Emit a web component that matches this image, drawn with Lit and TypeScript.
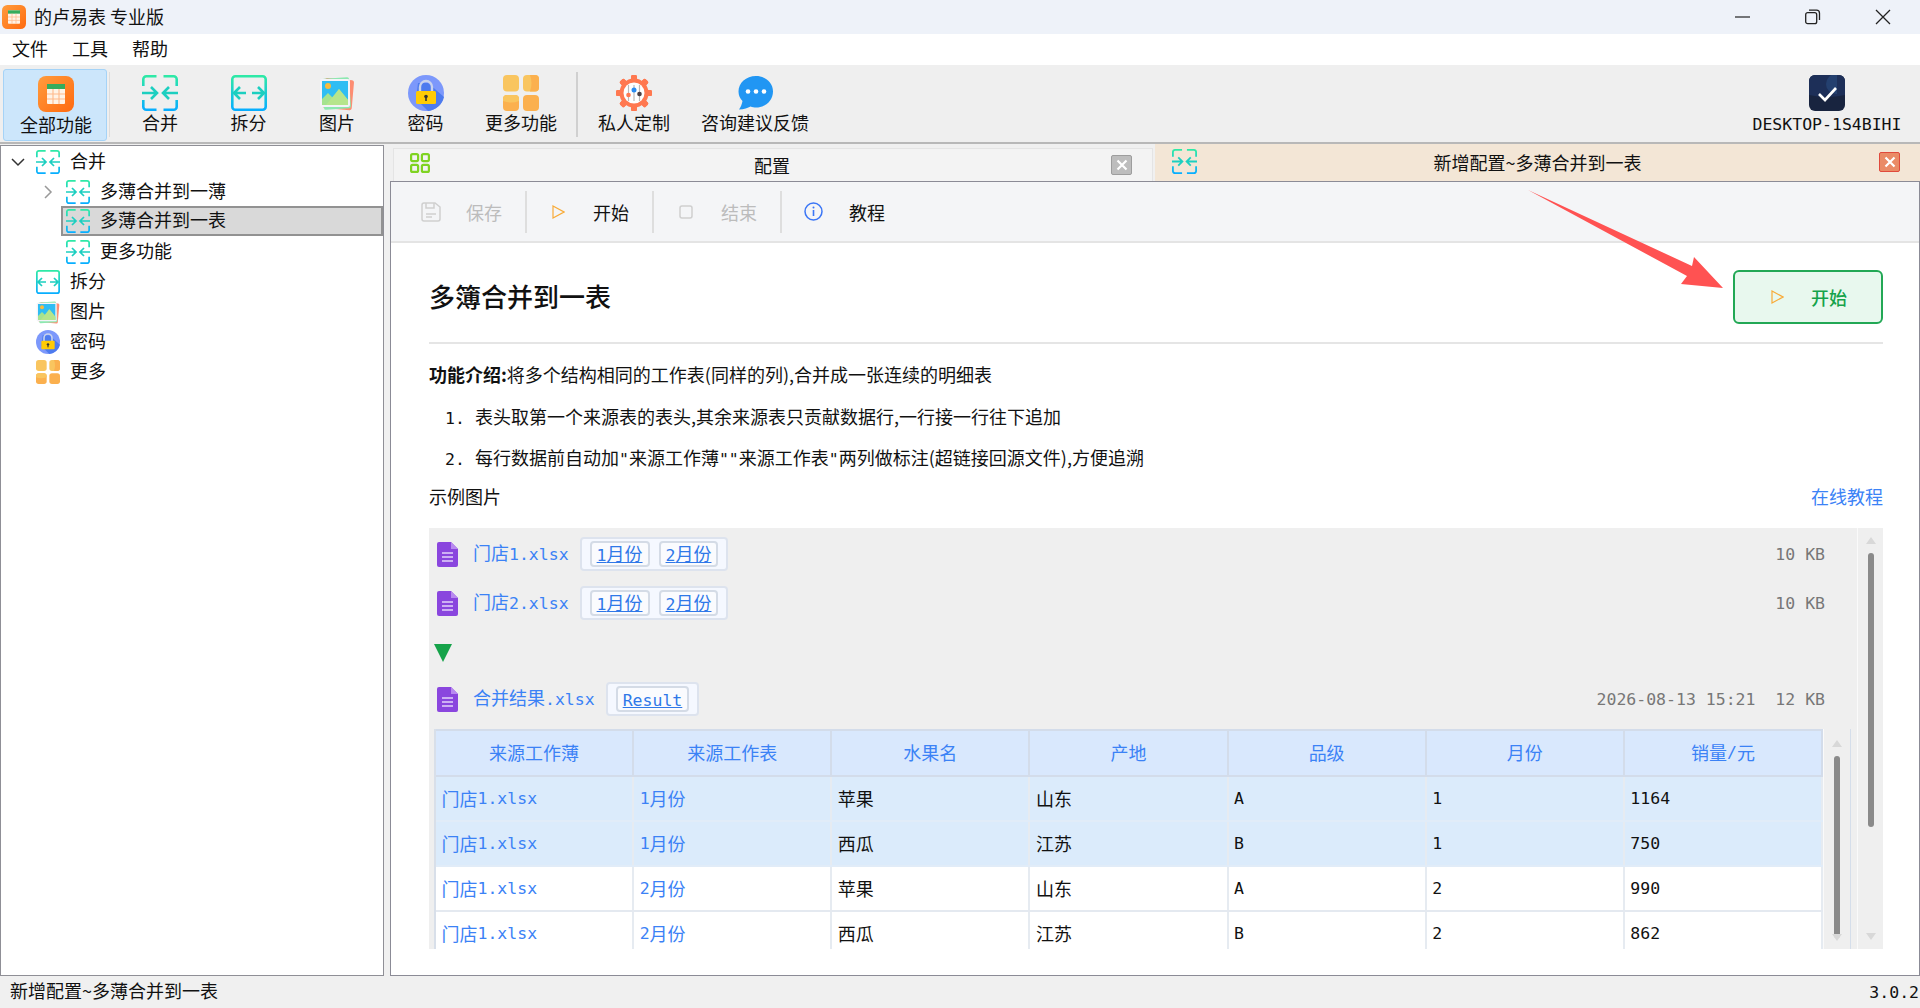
import { LitElement, html, css, svg } from "lit";
import { customElement } from "lit/decorators.js";

const t = (s: string) =>
  s.split(/([\x21-\x7e]+(?: +[\x21-\x7e]+)*)/).map((p, i) => (i % 2 ? html`<span class="lat">${p}</span>` : p));

const grad = (id: string) => svg`<defs><linearGradient id=${id} x1="0" y1="0" x2="0" y2="1"><stop offset="0" stop-color="#2ee9a6"/><stop offset="1" stop-color="#08aeff"/></linearGradient></defs>`;

const ic = (size: number, body: unknown) =>
  html`<svg class="ic" width=${size} height=${size} viewBox="0 0 36 36">${body}</svg>`;

const merge = (s = 36) =>
  ic(s, svg`${grad("gm")}<g fill="none" stroke="url(#gm)" stroke-width="2.6">
    <path d="M1.3 11V4.3a3 3 0 0 1 3-3H14.5M21.5 1.3H31.7a3 3 0 0 1 3 3V11M1.3 25v6.7a3 3 0 0 0 3 3H14.5M21.5 34.7H31.7a3 3 0 0 0 3-3V25"/></g>
    <g fill="none" stroke="#1ccfc0" stroke-width="2.6"><path d="M0 18H14M9 12l6 6-6 6M36 18H22M27 12l-6 6 6 6"/></g>`);

const split = (s = 36) =>
  ic(s, svg`${grad("gs")}<g fill="none" stroke="url(#gs)" stroke-width="2.6"><rect x="1.3" y="1.3" width="33.4" height="33.4" rx="3"/><path d="M18 1V35"/></g>
    <g fill="none" stroke="#1ccfc0" stroke-width="2.6"><path d="M15 18H3M9 12l-6 6 6 6M21 18H33M27 12l6 6-6 6"/></g>`);

const picture = (s = 36) =>
  ic(s, svg`<rect x="5" y="4" width="29" height="30" rx="2" fill="#ff7b5c" transform="rotate(5 18 18)" opacity=".85"/>
    <rect x="4" y="3" width="27" height="31" rx="2" fill="#8ce8b0" transform="rotate(-4 18 18)"/>
    <rect x="1" y="4" width="30" height="28" rx="2" fill="#f3f3f8"/>
    <rect x="3" y="6" width="26" height="24" fill="#2fbdf3"/>
    <circle cx="9" cy="11" r="3" fill="#f9bb3c"/>
    <path d="M3 24l6-6 5 5 6-9 9 11v5H3z" fill="#a5e38f"/><path d="M7 30l13-16 9 11v5z" fill="#b6e58c"/>`);

const lock = (s = 36) =>
  ic(s, svg`<circle cx="18" cy="18" r="18" fill="#7c98fb"/><path d="M10 8h10l16 14A18 18 0 0 1 20 36L8 24z" fill="#4d7bee"/>
    <path d="M12 17v-5a6 6 0 0 1 12 0v5" fill="none" stroke="#c9d3ec" stroke-width="2.4"/>
    <rect x="8" y="16" width="20" height="13" rx="1.5" fill="#ffcb05"/>
    <circle cx="18" cy="21.5" r="1.8" fill="#333"/><rect x="17.2" y="22" width="1.6" height="4" fill="#333"/>`);

const more = (s = 36) =>
  ic(s, svg`<rect x="0" y="0" width="16" height="16.5" rx="4" fill="#f9c55f"/>
    <rect x="20" y="0" width="16" height="16.5" rx="4" fill="#f9c55f"/><path d="M27 0h5a4 4 0 0 1 4 4v8.500a4 4 0 0 1-4 4h-5q3-8 0-16.500z" fill="#fbb04e"/>
    <rect x="0" y="20" width="16" height="16" rx="4" fill="#fbb04e"/><path d="M0 24a4 4 0 0 1 4-4h8a4 4 0 0 1 4 4v2q-8 3-16 0z" fill="#f9c55f"/>
    <rect x="20" y="20" width="16" height="16" rx="4" fill="#fbb04e"/>`);

const gear = (s = 36) =>
  ic(s, svg`<g fill="#ff7850">${[0, 45, 90, 135, 180, 225, 270, 315].map(
    (a) => svg`<rect x="15" y="0" width="6" height="36" rx="1.5" transform="rotate(${a} 18 18)"/>`)}</g>
    <circle cx="18" cy="18" r="14.500" fill="#ff7850"/><circle cx="18" cy="18" r="10.500" fill="#fff"/>
    <path d="M12.500 10v16M18 10v16M23.500 10v16" stroke="#b9b9b9" stroke-width="1.200"/>
    <circle cx="12.500" cy="20" r="2.300" fill="#ff7850"/><circle cx="18" cy="15" r="2.500" fill="#2b8cf0"/><circle cx="23.500" cy="19" r="2.300" fill="#4a3f45"/>`);

const bubble = (s = 36) =>
  ic(s, svg`<path d="M19 1C9 1 1.500 8 1.500 16.500c0 4 1.500 7 4 9.500-.5 3-2 6.500-3.500 8.500 5 0 9-1.500 11.500-3 2 .7 3.500 1 5.500 1 9.500 0 17-6.800 17-16S28.500 1 19 1z" fill="#2196f3"/>
    <circle cx="11" cy="16.500" r="2.300" fill="#fff"/><circle cx="19" cy="16.500" r="2.300" fill="#fff"/><circle cx="27" cy="16.500" r="2.300" fill="#fff"/>`);

const logo = (s = 36) =>
  ic(s, svg`<defs><linearGradient id="gl" x1="0" y1="0" x2="1" y2="1"><stop offset="0" stop-color="#ff9c3d"/><stop offset="1" stop-color="#ff6a10"/></linearGradient></defs>
    <rect width="36" height="36" rx="8" fill="url(#gl)"/>
    <rect x="9" y="8" width="18" height="20" rx="1" fill="#fff3e6"/><rect x="9" y="8" width="18" height="5" fill="#35ac5c"/>
    <path d="M9 18h18M9 23h18M15 13v15M21 13v15" stroke="#ffb98a" stroke-width="1.100"/>`);

const desk = (s = 36) =>
  ic(s, svg`<rect width="36" height="36" rx="6" fill="#18243f"/><path d="M6 0h24a6 6 0 0 1 6 6v14q-18 4-36 0V6a6 6 0 0 1 6-6z" fill="#1d2f58"/>
    <circle cx="27" cy="9" r="10" fill="#24406f" clip-path="inset(0 9px 0 0)"/>
    <path d="M10 19l6 6 11-12" fill="none" stroke="#fff" stroke-width="2.600"/>`);

const fileIcon = html`<svg class="ic" width="21" height="25" viewBox="0 0 21 25"><path d="M2 0h12l7 7v16a2 2 0 0 1-2 2H2a2 2 0 0 1-2-2V2a2 2 0 0 1 2-2z" fill="#8a46de"/><path d="M14 0l7 7h-7z" fill="#b98af0"/><path d="M5 11h11M5 15h11M5 19h11" stroke="#cdb0f3" stroke-width="1.800"/></svg>`;

const chevDown = html`<svg class="ic" width="14" height="10" viewBox="0 0 14 10"><path d="M1 2l6 6 6-6" fill="none" stroke="#333" stroke-width="1.500"/></svg>`;
const chevRight = html`<svg class="ic" width="10" height="14" viewBox="0 0 10 14"><path d="M2 1l6 6-6 6" fill="none" stroke="#999" stroke-width="1.500"/></svg>`;
const playIcon = html`<svg class="ic" width="13" height="14" viewBox="0 0 13 14"><path d="M1 1l11 6-11 6z" fill="none" stroke="#f8ab38" stroke-width="1.200"/></svg>`;

const closeX = html`<svg width="12" height="12" viewBox="0 0 12 12"><path d="M1.500 1.500l9 9M10.500 1.500l-9 9" stroke="#fff" stroke-width="2.200"/></svg>`;
const tabGrid = html`<svg class="ic" width="20" height="20" viewBox="0 0 20 20"><g fill="none" stroke="#7fd321" stroke-width="2.200"><rect x="1.100" y="1.100" width="7" height="7" rx="1.500"/><rect x="11.900" y="1.100" width="7" height="7" rx="1.500"/><rect x="1.100" y="11.900" width="7" height="7" rx="1.500"/><rect x="11.900" y="11.900" width="7" height="7" rx="1.500"/></g></svg>`;

const tools = [
  { w: 88, icon: merge(), label: "合并" },
  { w: 89, icon: split(), label: "拆分" },
  { w: 88, icon: picture(), label: "图片" },
  { w: 89, icon: lock(), label: "密码" },
  { w: 102, icon: more(), label: "更多功能" },
];
const tools2 = [
  { w: 108, icon: gear(), label: "私人定制" },
  { w: 134, icon: bubble(), label: "咨询建议反馈" },
];

const head = ["来源工作薄", "来源工作表", "水果名", "产地", "品级", "月份", "销量/元"];
const rows = [
  ["门店1.xlsx", "1月份", "苹果", "山东", "A", "1", "1164"],
  ["门店1.xlsx", "1月份", "西瓜", "江苏", "B", "1", "750"],
  ["门店1.xlsx", "2月份", "苹果", "山东", "A", "2", "990"],
  ["门店1.xlsx", "2月份", "西瓜", "江苏", "B", "2", "862"],
];

@customElement("app-root")
export class AppRoot extends LitElement {
  static styles = css`
    :host {
      display: flex; flex-direction: column; position: relative; width: 1920px; height: 1008px; overflow: hidden;
      font-family: "Noto Sans CJK SC", sans-serif; font-size: 18px; color: #111; background: #f0f0f0;
    }
    .lat { font-family: "DejaVu Sans Mono", monospace; font-size: 16.5px; white-space: pre; }
    .ic { display: block; flex: none; }
    .title { height: 34px; background: #eef2f9; display: flex; align-items: center; padding: 0 2px; flex: none; }
    .title .name { margin-left: 8px; line-height: 28px; padding-bottom: 2px; }
    .winbtns { margin-left: auto; display: flex; }
    .winbtn { width: 70px; height: 34px; display: flex; align-items: center; justify-content: center; }
    .menu { height: 31px; background: #fff; display: flex; align-items: center; padding-left: 12px; gap: 24px; flex: none; }
    .menu span { padding-bottom: 4px; }
    .toolbar { height: 77px; background: #efefef; border-bottom: 2px solid #b8b8b8; display: flex; align-items: stretch; flex: none; box-sizing: content-box; }
    .tool { display: flex; flex-direction: column; align-items: center; padding-top: 10px; flex: none; box-sizing: border-box; }
    .tool span.lb { line-height: 24px; margin-top: -1px; white-space: nowrap; }
    .tool.active { width: 104px; margin: 4px 0 1px 3px; padding: 6px 0 0 2px; background: #cce6fb; border: 1px solid #a5d3f7; border-radius: 3px; }
    .tool.active span.lb { margin-top: 0; }
    .vsep { width: 2px; margin: 7px 5px 5px; background: #dcdcdc; flex: none; }
    .vsep.first { width: 1px; margin: 7px 6px 5px 2px; }
    .vsep.second { margin: 7px 2px 5px 4px; background: #d0d0d0; }
    .desktop { margin-left: auto; width: 172px; margin-right: 7px; }
    .main { flex: 1; display: flex; min-height: 0; }
    .side { width: 384px; margin-top: 1px; background: #fff; border: 1px solid #8f8f96; box-sizing: border-box; padding-top: 1px; flex: none; }
    .tr { height: 30px; display: flex; align-items: center; position: relative; }
    .tr .arrow { width: 35px; box-sizing: border-box; padding-right: 2px; display: flex; justify-content: center; flex: none; }
    .tr .txt { margin-left: 10px; white-space: nowrap; padding-bottom: 4px; }
    .tr.l2 { padding-left: 30px; }
    .tr.sel { background: #d9d9d9; outline: 2px solid #929292; outline-offset: -2px; margin-left: 60px; padding-left: 5px; margin-top: -1px; margin-bottom: 1px; }
    .right { flex: 1; margin-left: 6px; display: flex; flex-direction: column; min-width: 0; }
    .tabs { height: 37px; display: flex; flex: none; align-items: flex-end; }
    .tab { display: flex; align-items: center; position: relative; justify-content: center; box-sizing: border-box; }
    .tab1 { width: 760px; height: 33px; margin-left: 3px; padding-right: 2px; background: #f3f3f3; border: 1px solid #e4e4e4; border-bottom: none; }
    .tab2 { flex: 1; height: 37px; margin-left: 2px; background: #f3e6d6; }
    .tab .tic { position: absolute; left: 16px; top: 4px; }
    .tab2 .tic { left: 17px; top: 5px; }
    .tab1 .tx { padding-bottom: 1px; }
    .tab2 .tx { padding-bottom: 2px; }
    .x { position: absolute; width: 21px; height: 20px; box-sizing: border-box; display: flex; align-items: center; justify-content: center; border-radius: 2px; }
    .tab1 .x { right: 20px; top: 6px; background: #bdbdbd; border: 1.500px solid #9d9d9d; }
    .tab2 .x { right: 20px; top: 8px; background: #ea8b66; border: 1.500px solid #e04a3c; }
    .panel { flex: 1; min-height: 0; background: #fff; border: 1px solid #8b8b96; display: flex; flex-direction: column; overflow: hidden; }
    .bar { height: 61px; flex: none; box-sizing: border-box; background: #f4f5f7; border-bottom: 2px solid #e4e4e4; display: flex; align-items: center; }
    .btn { display: flex; align-items: center; height: 42px; }
    .btn.off { color: #bcbcbc; }
    .sep { width: 2px; height: 42px; background: #dedede; flex: none; }
    .body { padding: 0 36px 0 38px; flex: 1; min-height: 0; display: flex; flex-direction: column; }
    .head { display: flex; justify-content: space-between; align-items: center; height: 90px; padding-top: 9px; border-bottom: 2px solid #e5e5e5; flex: none; box-sizing: content-box; }
    h1 { margin: 0; font-size: 26px; font-weight: 500; line-height: 36px; padding-bottom: 2px; }
    .go { width: 150px; height: 54px; box-sizing: border-box; background: #e8f8ee; border: 2px solid #22a855; border-radius: 6px; display: flex; align-items: center; padding-left: 36px; color: #16a34a; font-weight: 500; }
    .go span { margin-left: 27px; }
    .intro { margin-top: 9px; flex: none; }
    .ln { line-height: 42px; height: 41.500px; white-space: nowrap; }
    .ln b { font-weight: 700; }
    .li { padding-left: 16px; display: flex; }
    .li .n { width: 30px; flex: none; }
    .ex { display: flex; justify-content: space-between; height: 38px; line-height: 36px; flex: none; margin-bottom: 12.500px; }
    .ex .link { color: #3b82f6; }
    .box { height: 421px; flex: none; background: #efefef; display: flex; overflow: hidden; }
    .boxmain { flex: 1; min-width: 0; padding: 9px 32px 0 8px; border-right: 1px solid #fafafa; }
    .frow { height: 34px; display: flex; align-items: center; margin-bottom: 15px; color: #3b82f6; }
    .frow .name { margin-left: 15px; white-space: nowrap; padding-bottom: 5px; }
    .frow .meta { margin-left: auto; color: #777; padding-bottom: 5px; }
    .tags { margin-left: 11px; height: 34px; box-sizing: border-box; background: #f5f8ff; border: 2px solid #dde3ee; border-radius: 4px; display: flex; align-items: center; gap: 9px; padding: 0 8px; }
    .tag { height: 26px; line-height: 20px; box-sizing: border-box; border: 2px solid #d4dbe6; border-radius: 4px; background: #fafbfe; padding: 0 5px; text-decoration: underline; color: #2f78e8; white-space: nowrap; }
    .tri { width: 0; height: 0; border-left: 9px solid transparent; border-right: 9px solid transparent; border-top: 18px solid #16a34a; margin: 24px 0 20px -3px; }
    .tb { margin: -2px 0 0 -3px; width: 1417px; display: flex; height: 220px; border-left: 2px solid #d8dfe9; border-right: 1px solid #d5deea; box-sizing: border-box; background: #fff; }
    .grid { flex: 1; min-width: 0; display: flex; flex-direction: column; }
    .r { display: grid; grid-template-columns: repeat(7, 1fr); height: 45px; box-sizing: border-box; border-bottom: 2px solid #e4e9f0; flex: none; }
    .r.h { height: 48px; background: #d9e8fd; border-top: 2px solid #d3dcea; border-bottom: 2px solid #d3dcea; color: #3b82f6; }
    .r.s { background: #dbebfb; border-bottom-color: #e1ecf8; }
    .c { display: flex; align-items: center; padding-left: 5.500px; padding-bottom: 1px; border-right: 2px solid #e6ebf1; white-space: nowrap; min-width: 0; }
    .r.h .c { justify-content: center; padding: 0 0 2px; border-right: 2px solid #d3dcea; }
    .c.b { color: #3b82f6; }
    .sb { flex: none; position: relative; background: #efefef; }
    .sb.outer { width: 25px; }
    .sb.inner { width: 26px; border-left: 1px solid #fafafa; }
    .thumb { position: absolute; left: 50%; margin-left: -3px; width: 6px; border-radius: 3px; background: #8a8a8a; }
    .outer .thumb { top: 25px; height: 274px; }
    .inner .thumb { top: 27px; height: 182px; }
    .up, .dn { position: absolute; left: 50%; margin-left: -5px; width: 0; height: 0; border-left: 5px solid transparent; border-right: 5px solid transparent; }
    .up { border-bottom: 7px solid #d8d8d8; }
    .dn { border-top: 7px solid #d8d8d8; }
    .outer .up { top: 9px; } .outer .dn { top: 405px; }
    .inner .up { top: 11px; } .inner .dn { top: 205px; }
    .status { height: 32px; flex: none; display: flex; justify-content: space-between; align-items: center; padding: 0 1px 4px 10px; box-sizing: border-box; background: #f0f0f0; }
    .arrow-ov { position: absolute; left: 1520px; top: 185px; }
  `;

  private tool(x: { w: number; icon: unknown; label: string }) {
    return html`<div class="tool" style="width:${x.w}px">${x.icon}<span class="lb">${x.label}</span></div>`;
  }

  private btn(icon: unknown, label: string, off: boolean, pl: number, gap: number, pr: number) {
    return html`<div class="btn ${off ? "off" : ""}" style="padding:0 ${pr}px 0 ${pl}px">${icon}<span style="margin-left:${gap}px">${label}</span></div>`;
  }

  render() {
    const saveI = html`<svg class="ic" width="20" height="20" viewBox="0 0 20 20"><g fill="none" stroke="#cfcfcf" stroke-width="1.500"><path d="M3 1h11l5 4v12a2 2 0 0 1-2 2H3a2 2 0 0 1-2-2V3a2 2 0 0 1 2-2z"/><path d="M5 1v5h8V1M5 12h10M5 15h6"/></g></svg>`;
    const stopI = html`<svg class="ic" width="14" height="14" viewBox="0 0 14 14"><rect x="1" y="1" width="12" height="12" rx="2" fill="none" stroke="#cfcfcf" stroke-width="1.500"/></svg>`;
    const infoI = html`<svg class="ic" width="19" height="19" viewBox="0 0 19 19"><circle cx="9.500" cy="9.500" r="8.500" fill="none" stroke="#3b76f6" stroke-width="1.500"/><path d="M9.500 8v6" stroke="#3b76f6" stroke-width="1.600"/><circle cx="9.500" cy="5.500" r="1" fill="#3b76f6"/></svg>`;
    return html`
      <div class="title">${logo(24)}<span class="name">的卢易表 专业版</span>
        <div class="winbtns">
          <div class="winbtn"><svg width="16" height="16" viewBox="0 0 16 16"><path d="M0 8h15" stroke="#222" stroke-width="1.200"/></svg></div>
          <div class="winbtn"><svg width="16" height="16" viewBox="0 0 16 16"><rect x=".7" y="3.700" width="11" height="11" rx="2" fill="none" stroke="#222" stroke-width="1.300"/><path d="M4 1.200h7.500a3 3 0 0 1 3 3V11" fill="none" stroke="#222" stroke-width="1.300"/></svg></div>
          <div class="winbtn"><svg width="16" height="16" viewBox="0 0 16 16"><path d="M1 1l14 14M15 1L1 15" stroke="#222" stroke-width="1.300"/></svg></div>
        </div>
      </div>
      <div class="menu"><span>文件</span><span>工具</span><span>帮助</span></div>
      <div class="toolbar">
        <div class="tool active">${logo(36)}<span class="lb">全部功能</span></div>
        <div class="vsep first"></div>
        ${tools.map((x) => this.tool(x))}
        <div class="vsep second"></div>
        ${tools2.map((x) => this.tool(x))}
        <div class="tool desktop">${desk(36)}<span class="lb">${t("DESKTOP-1S4BIHI")}</span></div>
      </div>
      <div class="main">
        <div class="side">
          <div class="tr"><div class="arrow">${chevDown}</div>${merge(24)}<span class="txt">合并</span></div>
          <div class="tr l2"><div class="arrow">${chevRight}</div>${merge(24)}<span class="txt">多薄合并到一薄</span></div>
          <div class="tr sel">${merge(24)}<span class="txt">多薄合并到一表</span></div>
          <div class="tr l2"><div class="arrow"></div>${merge(24)}<span class="txt">更多功能</span></div>
          <div class="tr"><div class="arrow"></div>${split(24)}<span class="txt">拆分</span></div>
          <div class="tr"><div class="arrow"></div>${picture(24)}<span class="txt">图片</span></div>
          <div class="tr"><div class="arrow"></div>${lock(24)}<span class="txt">密码</span></div>
          <div class="tr"><div class="arrow"></div>${more(24)}<span class="txt">更多</span></div>
        </div>
        <div class="right">
          <div class="tabs">
            <div class="tab tab1"><span class="tic">${tabGrid}</span><span class="tx">配置</span><span class="x">${closeX}</span></div>
            <div class="tab tab2"><span class="tic">${merge(25)}</span><span class="tx">新增配置~多薄合并到一表</span><span class="x">${closeX}</span></div>
          </div>
          <div class="panel">
            <div class="bar">
              ${this.btn(saveI, "保存", true, 30, 25, 23)}<div class="sep"></div>
              ${this.btn(playIcon, "开始", false, 25, 28, 23)}<div class="sep"></div>
              ${this.btn(stopI, "结束", true, 25, 28, 23)}<div class="sep"></div>
              ${this.btn(infoI, "教程", false, 22, 26, 0)}
            </div>
            <div class="body">
              <div class="head"><h1>多簿合并到一表</h1><div class="go">${playIcon}<span>开始</span></div></div>
              <div class="intro">
                <div class="ln"><b>功能介绍:</b>将多个结构相同的工作表(同样的列),合并成一张连续的明细表</div>
                <div class="ln li"><span class="n">${t("1.")}</span><span>表头取第一个来源表的表头,其余来源表只贡献数据行,一行接一行往下追加</span></div>
                <div class="ln li"><span class="n">${t("2.")}</span><span>每行数据前自动加${t('"')}来源工作薄${t('""')}来源工作表${t('"')}两列做标注(超链接回源文件),方便追溯</span></div>
              </div>
              <div class="ex"><span>示例图片</span><span class="link">在线教程</span></div>
              <div class="box">
                <div class="boxmain">
                  <div class="frow">${fileIcon}<span class="name">${t("门店1.xlsx")}</span><div class="tags"><span class="tag">${t("1")}月份</span><span class="tag">${t("2")}月份</span></div><span class="meta">${t("10 KB")}</span></div>
                  <div class="frow">${fileIcon}<span class="name">${t("门店2.xlsx")}</span><div class="tags"><span class="tag">${t("1")}月份</span><span class="tag">${t("2")}月份</span></div><span class="meta">${t("10 KB")}</span></div>
                  <div class="tri"></div>
                  <div class="frow">${fileIcon}<span class="name">${t("合并结果.xlsx")}</span><div class="tags"><span class="tag">${t("Result")}</span></div><span class="meta">${t("2026-08-13 15:21  12 KB")}</span></div>
                  <div class="tb">
                    <div class="grid">
                      <div class="r h">${head.map((h) => html`<div class="c">${t(h)}</div>`)}</div>
                      ${rows.map((r, i) => html`<div class="r ${i < 2 ? "s" : ""}">${r.map((c, j) => html`<div class="c ${j < 2 ? "b" : ""}">${t(c)}</div>`)}</div>`)}
                    </div>
                    <div class="sb inner"><div class="up"></div><div class="thumb"></div><div class="dn"></div></div>
                  </div>
                </div>
                <div class="sb outer"><div class="up"></div><div class="thumb"></div><div class="dn"></div></div>
              </div>
            </div>
          </div>
        </div>
      </div>
      <div class="status"><span>新增配置~多薄合并到一表</span><span>${t("3.0.2")}</span></div>
      <svg class="arrow-ov" width="210" height="110" viewBox="1520 185 210 110"><path d="M1528 190L1692 266L1694 257L1723 288L1681 284L1687 276Z" fill="#ff5252"/></svg>
    `;
  }
}
